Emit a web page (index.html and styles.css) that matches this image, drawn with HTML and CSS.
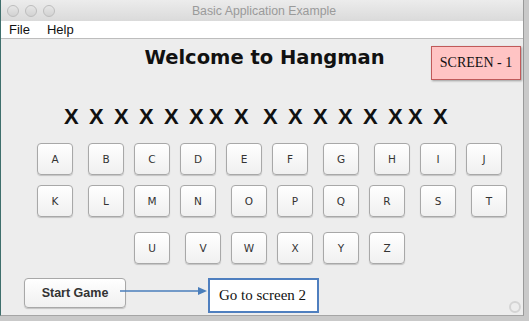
FILE: index.html
```html
<!DOCTYPE html>
<html lang="en">
<head>
    <meta charset="UTF-8">
    <meta name="viewport" content="width=device-width, initial-scale=1.0">
    <title>Basic Application Example</title>
    <link rel="stylesheet" href="styles.css">
</head>
<body>
    <div class="window">
        <div class="titlebar">
            <div class="lights">
                <span class="light"></span>
                <span class="light"></span>
                <span class="light"></span>
            </div>
            <div class="title">Basic Application Example</div>
            <div></div>
        </div>
        <div class="menubar">
            <span>File</span>
            <span>Help</span>
        </div>
        <div class="content">
            <h1>Welcome to Hangman</h1>
            <div class="note screen-tag">SCREEN - 1</div>

            <div class="word">
                <span>X</span><span>X</span><span>X</span><span>X</span><span>X</span><span>X</span><span class="tight">X</span><span>X</span>
                <span class="space">X</span><span>X</span><span>X</span><span>X</span><span>X</span><span>X</span><span class="tight">X</span><span>X</span>
            </div>

            <div class="keys row-1">
                <button class="key">A</button>
                <button class="key wide">B</button>
                <button class="key">C</button>
                <button class="key">D</button>
                <button class="key">E</button>
                <button class="key">F</button>
                <button class="key wide">G</button>
                <button class="key wide">H</button>
                <button class="key">I</button>
                <button class="key">J</button>
            </div>
            <div class="keys row-2">
                <button class="key">K</button>
                <button class="key wide">L</button>
                <button class="key">M</button>
                <button class="key">N</button>
                <button class="key wide">O</button>
                <button class="key">P</button>
                <button class="key">Q</button>
                <button class="key">R</button>
                <button class="key wide">S</button>
                <button class="key wide">T</button>
            </div>
            <div class="keys row-3">
                <button class="key">U</button>
                <button class="key wide">V</button>
                <button class="key">W</button>
                <button class="key">X</button>
                <button class="key">Y</button>
                <button class="key">Z</button>
            </div>

            <div class="footer">
                <button class="start">Start Game</button>
                <svg class="arrow" width="88" height="10" viewBox="0 0 88 10">
                    <line x1="0" y1="5" x2="80" y2="5" stroke="#4a7ebb" stroke-width="1.5"/>
                    <polygon points="78,1 87,5 78,9" fill="#4a7ebb"/>
                </svg>
                <div class="note goto">Go to screen 2</div>
            </div>

            <span class="grip"></span>
        </div>
    </div>
</body>
</html>
```

FILE: styles.css
```css
body {
    margin: 0;
    padding: 0;
    width: 529px;
    height: 321px;
    overflow: hidden;
    background-color: #c9c9c9;
    font-family: "Liberation Sans", Arial, sans-serif;
}

.window {
    width: 524px;
    height: 316px;
    box-sizing: border-box;
    display: flex;
    flex-direction: column;
    background-color: #ededed;
    border-left: 1px solid #3f6f6c;
    border-right: 1px solid #9a9a9a;
    border-bottom: 1px solid #a5a5a5;
}

.titlebar {
    height: 21px;
    display: grid;
    grid-template-columns: 1fr auto 1fr;
    align-items: center;
    background: linear-gradient(#ececec, #dadada);
}
.lights {
    display: flex;
    gap: 6px;
    padding-left: 6px;
}
.light {
    width: 12px;
    height: 12px;
    box-sizing: border-box;
    border-radius: 50%;
    background: linear-gradient(#e6e6e6, #d2d2d2);
    border: 1px solid #bdbdbd;
}
.title {
    font-size: 12.3px;
    color: #9a9a9a;
    padding-left: 4px;
}

.menubar {
    height: 17px;
    display: flex;
    gap: 17px;
    align-items: center;
    padding-left: 8px;
    background-color: #fff;
    border-bottom: 1px solid #bdbdbd;
    font-size: 13px;
    color: #111;
}

.content {
    flex: 1;
    position: relative;
    display: flex;
    flex-direction: column;
}

h1 {
    margin: 0;
    padding-top: 7px;
    line-height: 24px;
    text-align: center;
    font-family: "DejaVu Sans", sans-serif;
    font-size: 19.5px;
    font-weight: bold;
    color: #111;
    padding-left: 5px;
}

.note {
    box-sizing: border-box;
    font-family: "Liberation Serif", "Times New Roman", serif;
    color: #111;
}
.screen-tag {
    position: absolute;
    top: 7px;
    right: 2px;
    width: 90px;
    height: 34px;
    line-height: 32px;
    text-align: center;
    font-size: 14px;
    background-color: #ffc4c4;
    border: 1px solid #c05a5a;
    box-shadow: 1px 1px 2px rgba(0, 0, 0, 0.35);
}

.word {
    display: flex;
    margin-top: 34px;
    padding-left: 63px;
    line-height: 26px;
    font-size: 22px;
    font-weight: bold;
    color: #111;
}
.word span {
    width: 14px;
    margin-left: 11px;
    text-align: center;
}
.word span:first-child {
    margin-left: 0;
}
.word span.tight {
    margin-left: 6px;
}
.word span.space {
    margin-left: 15px;
}

.keys {
    display: flex;
}
.row-1 {
    margin-top: 13px;
    padding-left: 36px;
}
.row-2 {
    margin-top: 10px;
    padding-left: 36px;
}
.row-3 {
    margin-top: 15px;
    padding-left: 133px;
}

.key, .start {
    padding: 0;
    box-sizing: border-box;
    border: 1px solid #a8a8a8;
    border-radius: 4px;
    background: linear-gradient(#ffffff, #f0f0f0);
    box-shadow: 0 1px 1px rgba(0, 0, 0, 0.18);
    color: #333;
}
.key {
    width: 36px;
    height: 32px;
    margin-left: 10px;
    font-family: "DejaVu Sans", sans-serif;
    font-size: 10.5px;
}
.key:first-child {
    margin-left: 0;
}
.key.wide {
    margin-left: 15px;
}

.footer {
    display: flex;
    margin-top: 14px;
    padding-left: 23px;
}
.start {
    width: 102px;
    height: 30px;
    font-family: "Liberation Sans", Arial, sans-serif;
    font-size: 12.5px;
    font-weight: bold;
}
.arrow {
    margin-left: -6px;
    margin-top: 8px;
}
.goto {
    width: 111px;
    height: 35px;
    padding-left: 9px;
    line-height: 31px;
    font-size: 15px;
    background-color: #fff;
    border: 2px solid #4f7fbf;
}

.grip {
    position: absolute;
    right: 2px;
    bottom: 2px;
    width: 12px;
    height: 12px;
    box-sizing: border-box;
    border: 2px solid #d4d4d4;
    border-radius: 50%;
}
```
